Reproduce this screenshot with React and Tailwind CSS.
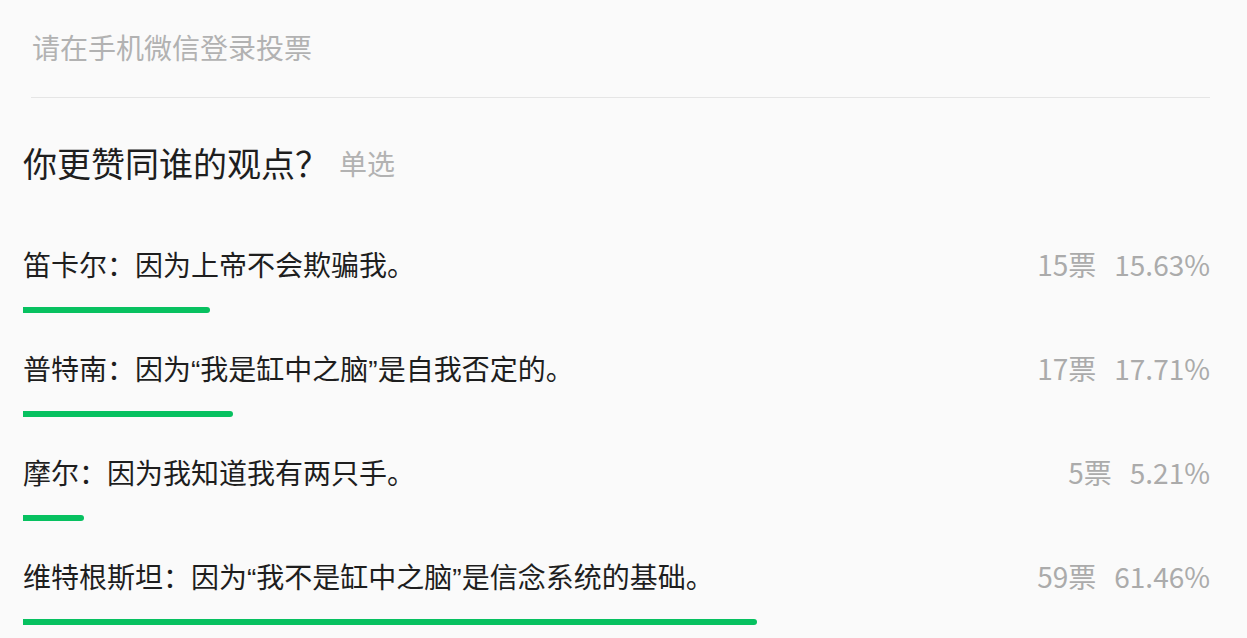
import React from "react";

const Q = ({ children }) => (
  <span style={{ fontFamily: '"Liberation Sans", sans-serif' }}>{children}</span>
);

const options = [
  { text: <>笛卡尔：因为上帝不会欺骗我。</>, votes: 15, pct: "15.63%", bar: 187 },
  {
    text: (
      <>
        普特南：因为<Q>“</Q>我是缸中之脑<Q>”</Q>是自我否定的。
      </>
    ),
    votes: 17,
    pct: "17.71%",
    bar: 210,
  },
  { text: <>摩尔：因为我知道我有两只手。</>, votes: 5, pct: "5.21%", bar: 61 },
  {
    text: (
      <>
        维特根斯坦：因为<Q>“</Q>我不是缸中之脑<Q>”</Q>是信念系统的基础。
      </>
    ),
    votes: 59,
    pct: "61.46%",
    bar: 734,
  },
];

const App = () => {
  return (
    <div
      className="w-full h-[638px] bg-[#fafafa] overflow-hidden"
      style={{ fontFamily: '"Noto Sans CJK SC", "Microsoft YaHei", sans-serif' }}
    >
      {/* 登录提示 */}
      <div className="pt-[27px] pl-[32px] text-[28px] leading-[40px] text-[#b2b2b2]">
        请在手机微信登录投票
      </div>
      <div className="mt-[30px] ml-[31px] mr-[37px] h-px bg-[#e5e5e5]" />

      {/* 题目 */}
      <div className="mt-[41px] pl-[23px] flex items-center h-[48px]">
        <span className="text-[34px] leading-[46px] text-[#1e1e1e]">你更赞同谁的观点？</span>
        <span className="ml-[10px] text-[28px] leading-[46px] text-[#b2b2b2]">单选</span>
      </div>

      {/* 选项 */}
      <div className="mt-[59px] pl-[23px] pr-[37px] flex flex-col gap-[37px]">
        {options.map((o, i) => (
          <div key={i}>
            <div className="flex items-start justify-between h-[40px] text-[28px] leading-[37px]">
              <span className="text-[#1e1e1e]">{o.text}</span>
              <span className="text-[#ababab] flex">
                <span>{o.votes}票</span>
                <span className="ml-[18px]">{o.pct}</span>
              </span>
            </div>
            <div
              className="mt-[21px] h-[6px] bg-[#07c160] rounded-r-[3px]"
              style={{ width: o.bar }}
            />
          </div>
        ))}
      </div>
    </div>
  );
};

export default App;
